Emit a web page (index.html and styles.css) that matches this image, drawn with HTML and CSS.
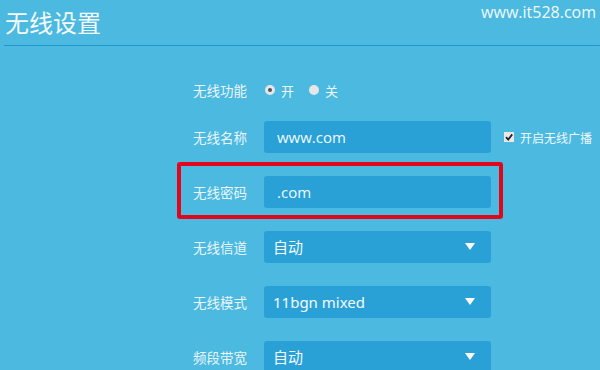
FILE: index.html
```html
<!DOCTYPE html>
<html lang="zh-CN">
<head>
  <meta charset="UTF-8" />
  <title>无线设置</title>
  <meta name="viewport" content="width=device-width, initial-scale=1.0" />
  <link rel="stylesheet" href="styles.css">
</head>
<body>

<header class="top">
  <h1>无线设置</h1>
  <span class="site">www.it528.com</span>
</header>

<form class="settings">

  <div class="row row-first">
    <label class="lbl">无线功能</label>
    <div class="radios">
      <span class="radio on"></span><span class="opt">开</span>
      <span class="radio"></span><span class="opt">关</span>
    </div>
  </div>

  <div class="row">
    <label class="lbl">无线名称</label>
    <div class="field">www.com</div>
    <span class="check">
      <svg width="10" height="10" viewBox="0 0 10 10">
        <rect x="0" y="0" width="10" height="10" fill="#e8e8e8" />
        <path d="M2 5.2 L4.2 7.6 L8.2 2.4" stroke="#222" stroke-width="1.8" fill="none" />
      </svg>
    </span>
    <span class="check-text">开启无线广播</span>
  </div>

  <div class="row marked">
    <label class="lbl">无线密码</label>
    <div class="field">.com</div>
  </div>

  <div class="row">
    <label class="lbl">无线信道</label>
    <div class="field select">自动<span class="arrow"></span></div>
  </div>

  <div class="row">
    <label class="lbl">无线模式</label>
    <div class="field select">11bgn mixed<span class="arrow"></span></div>
  </div>

  <div class="row">
    <label class="lbl">频段带宽</label>
    <div class="field select">自动<span class="arrow"></span></div>
  </div>

</form>

</body>
</html>
```

FILE: styles.css
```css
*, *::before, *::after { box-sizing: border-box; }
body {
  margin: 0;
  background: #4bb9e0;
  color: #eef8fc;
  font-family: "Noto Sans CJK SC", "Noto Sans", sans-serif;
  overflow: hidden;
}

.top {
  display: flex;
  justify-content: space-between;
  align-items: flex-start;
  height: 46px;
  margin-left: 4px;
  border-bottom: 1px solid #2299cc;
}

.top h1 {
  margin: 0;
  padding: 5px 0 0 1px;
  font-size: 24px;
  font-weight: normal;
  line-height: 34px;
  color: #f4fbfe;
}

.site {
  font-family: "Open Sans", "Noto Sans", sans-serif;
  font-size: 16px;
  line-height: 20px;
  padding: 2px 4px 0 0;
  color: #f0f9fd;
}

.settings {
  display: flex;
  flex-direction: column;
  gap: 23px;
  padding: 28px 0 0 193px;
}

.row {
  display: flex;
  align-items: center;
  height: 32px;
}

.row-first { margin-bottom: -8px; }

.lbl {
  width: 71px;
  font-size: 13.5px;
  color: #eaf6fb;
}

.radios {
  display: flex;
  align-items: center;
  font-size: 13px;
}

.radio {
  width: 10px;
  height: 10px;
  border-radius: 50%;
  background: #e4e6e8;
  margin-left: 1px;
  display: flex;
  align-items: center;
  justify-content: center;
}

.radio.on::after {
  content: "";
  width: 4px;
  height: 4px;
  border-radius: 50%;
  background: #555;
}

.opt { margin: 0 14px 0 6px; }

.field {
  position: relative;
  width: 227px;
  height: 32px;
  background: #2aa1d6;
  border-radius: 3px;
  padding-left: 13px;
  font-family: "Open Sans", "Noto Sans", "Noto Sans CJK SC", sans-serif;
  font-size: 15px;
  line-height: 32px;
  color: #f2faff;
}

.field.select {
  padding-left: 9px;
  font-family: "Noto Sans", "Noto Sans CJK SC", sans-serif;
}

.arrow {
  position: absolute;
  right: 16px;
  top: 12px;
  width: 0;
  height: 0;
  border-left: 5px solid transparent;
  border-right: 5px solid transparent;
  border-top: 7px solid #ffffff;
}

.check {
  display: flex;
  margin-left: 13px;
}

.check-text {
  margin-left: 6px;
  font-size: 12px;
  color: #eef8fc;
}

.marked { position: relative; }

/* red annotation frame */
.marked::after {
  content: "";
  position: absolute;
  left: -16px;
  top: -14px;
  width: 326px;
  height: 57px;
  border: 4px solid #e2061c;
  border-radius: 3px;
}
```
